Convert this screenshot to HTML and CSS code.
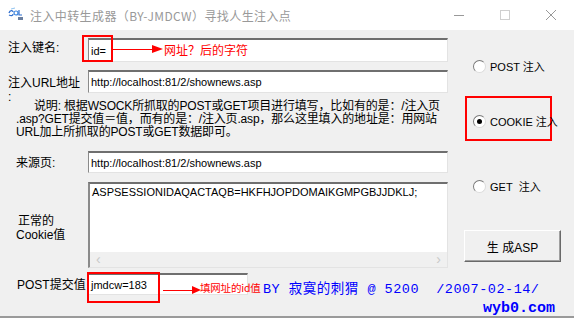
FILE: index.html
```html
<!DOCTYPE html>
<html lang="zh-CN">
<head>
<meta charset="utf-8">
<title>注入中转生成器</title>
<link rel="stylesheet" href="styles.css">
</head>
<body>
<div class="window">
  <div class="titlebar">
    <svg class="appicon" width="16" height="14" viewBox="0 0 16 14">
      <path d="M1 6 C2 3 5 3 5 5 M1 8 C3 9 5 9 5 7" fill="none" stroke="#2f6fcf" stroke-width="1.3"/>
      <circle cx="8" cy="6" r="2" fill="none" stroke="#3d86e0" stroke-width="1.2"/>
      <path d="M11 3 L11 8 L14 8" fill="none" stroke="#2f6fcf" stroke-width="1.2"/>
      <path d="M3 2 L7 1" stroke="#8fc3f0" stroke-width="1"/>
      <rect x="10" y="10" width="5" height="3" fill="#6a7fa0"/>
    </svg>
    <span class="title">注入中转生成器（BY-JMDCW）寻找人生注入点</span>
    <div class="controls">
      <span class="ctl"><svg width="12" height="12" viewBox="0 0 12 12"><path d="M1 6.5 H11" stroke="#999" stroke-width="1"/></svg></span>
      <span class="ctl"><svg width="12" height="12" viewBox="0 0 12 12"><rect x="1.5" y="1.5" width="9" height="9" fill="none" stroke="#cfcfcf" stroke-width="1"/></svg></span>
      <span class="ctl"><svg width="12" height="12" viewBox="0 0 12 12"><path d="M1 1 L11 11 M11 1 L1 11" stroke="#999" stroke-width="1"/></svg></span>
    </div>
  </div>

  <div class="client">
    <div class="top">
      <div class="form">
        <div class="row r1">
          <div class="label l1">注入键名:</div>
          <div class="field h24 annot">
            <span class="val">id=</span>
            <span class="redbox box1"></span>
            <span class="arrow arrow1"><span class="shaft"></span><span class="head"></span></span>
            <span class="note note1">网址？后的字符</span>
          </div>
        </div>
        <div class="row r2">
          <div class="label l2"><span class="ln">注入URL地址</span><span class="ln">:</span></div>
          <div class="field h23"><span class="val">http://localhost:81/2/shownews.asp</span></div>
        </div>
        <div class="desc">
          <span class="ind">说明: 根据WSOCK所抓取的POST或GET项目进行填写，比如有的是：/注入页</span><br>
          .asp?GET提交值＝值，而有的是：/注入页.asp，那么这里填入的地址是：用网站<br>
          URL加上所抓取的POST或GET数据即可。
        </div>
        <div class="row r3">
          <div class="label l3">来源页:</div>
          <div class="field h22"><span class="val">http://localhost:81/2/shownews.asp</span></div>
        </div>
        <div class="row r4">
          <div class="label l4"><span class="ln c1">正常的</span><span class="ln">Cookie值</span></div>
          <div class="field area">
            <div class="areatext">ASPSESSIONIDAQACTAQB=HKFHJOPDOMAIKGMPGBJJDKLJ;</div>
            <div class="hscroll"><span class="chev">&lsaquo;</span><span class="chev">&rsaquo;</span></div>
          </div>
        </div>
      </div>

      <div class="side">
        <div class="opt o-post"><span class="radio"></span><span>POST 注入</span></div>
        <div class="cookiebox"><div class="opt"><span class="radio on"></span><span>COOKIE 注入</span></div></div>
        <div class="opt o-get"><span class="radio"></span><span>GET&nbsp; 注入</span></div>
        <div class="btn">生 成ASP</div>
      </div>
    </div>

    <div class="bottom">
      <div class="label l5">POST提交值</div>
      <div class="field h22 small annot">
        <span class="val">jmdcw=183</span>
        <span class="redbox box2"></span>
        <span class="arrow arrow2"><span class="shaft"></span><span class="head"></span></span>
        <span class="note note2">填网址的id值</span>
      </div>
      <div class="sign">BY 寂寞的刺猬 @ 5200&nbsp; /2007-02-14/</div>
    </div>
    <div class="site">wyb0.com</div>
  </div>
  <div class="edge"></div>
</div>
</body>
</html>
```

FILE: styles.css
```css
* { box-sizing: border-box; }
html, body { margin: 0; padding: 0; }
body {
  width: 574px;
  height: 318px;
  overflow: hidden;
  background: #f0f0f0;
  font-family: "Liberation Sans", "Noto Sans CJK SC", sans-serif;
  font-size: 12px;
  color: #000;
}
.window { width: 574px; height: 318px; display: flex; flex-direction: column; }

/* title bar */
.titlebar {
  height: 30px;
  background: #fff;
  display: flex;
  align-items: center;
  padding-left: 8px;
  flex: none;
}
.appicon { flex: none; margin-top: -2px; }
.title {
  margin-left: 6px;
  font-family: "Noto Sans CJK SC", sans-serif;
  font-size: 12px;
  color: #999;
  letter-spacing: 0.4px;
}
.controls { margin-left: auto; display: flex; height: 30px; }
.ctl { width: 46px; height: 30px; display: flex; align-items: center; justify-content: center; }

/* client */
.client {
  height: 286px;
  flex: none;
  display: flex;
  flex-direction: column;
}
.top { display: flex; height: 238px; flex: none; }
.form { width: 448px; padding-left: 8px; display: flex; flex-direction: column; }

.row { display: grid; grid-template-columns: 80px 360px; }
.r1 { margin-top: 8px; height: 24px; }
.r2 { margin-top: 8px; height: 23px; }
.r3 { margin-top: 12px; height: 22px; }
.r4 { margin-top: 9px; height: 86px; }

.label { font-size: 12px; line-height: 14px; white-space: nowrap; }
.ln { display: block; }
.l1 { align-self: center; padding-bottom: 5px; }
.l2 { padding-top: 6px; }
.l3 { align-self: center; padding-left: 8px; padding-top: 1px; }
.l4 { align-self: center; padding-left: 8px; padding-top: 6px; }
.l4 .c1 { padding-left: 2px; }

.field {
  position: relative;
  background: #fff;
  border-top: 2px solid #6f6f6f;
  border-left: 1px solid #8a8a8a;
  border-right: 1px solid #e3e3e3;
  border-bottom: 1px solid #e3e3e3;
  display: flex;
  align-items: center;
  font-size: 11px;
}
.h24 { height: 24px; }
.h23 { height: 23px; }
.h22 { height: 22px; }
.val { padding-left: 2px; white-space: nowrap; }

.area { height: 86px; flex-direction: column; align-items: stretch; border-left-width: 2px; }
.areatext { flex: 1; padding: 2px 0 0 2px; white-space: nowrap; font-size: 11px; line-height: 13px; }
.hscroll {
  height: 15px;
  background: #f0f0f0;
  display: flex;
  justify-content: space-between;
  align-items: center;
  padding: 0 6px;
  color: #c8c8c8;
  font-size: 14px;
  line-height: 15px;
}

.desc {
  margin-top: 7px;
  margin-left: 8px;
  height: 39px;
  font-size: 12px;
  line-height: 13px;
  letter-spacing: -0.17px;
  white-space: nowrap;
}
.ind { padding-left: 18px; }

/* annotations */
.redbox { position: absolute; border: 2px solid #f00; }
.box1 { left: -7px; top: -5px; width: 31px; height: 27px; }
.box2 { left: -2px; top: -3px; width: 73px; height: 31px; }
.arrow { position: absolute; display: flex; align-items: center; height: 10px; }
.shaft { width: 39px; height: 1px; background: #f00; }
.head { width: 0; height: 0; border-left: 11px solid #f00; border-top: 4px solid transparent; border-bottom: 4px solid transparent; }
.arrow1 { left: 24px; top: 4px; }
.arrow2 { left: 74px; top: 10px; }
.arrow2 .shaft { width: 29px; }
.arrow2 .head { border-left-width: 9px; }
.note { position: absolute; color: #f00; font-family: "Noto Sans CJK SC", sans-serif; white-space: nowrap; }
.note1 { left: 75px; top: 0px; font-size: 12px; line-height: 20px; }
.note2 { left: 111px; top: 4px; font-size: 10.5px; line-height: 18px; letter-spacing: -0.2px; }

/* side */
.side { margin-left: 16px; width: 97px; display: flex; flex-direction: column; }
.opt { display: flex; align-items: center; height: 16px; padding-left: 9px; font-size: 11px; white-space: nowrap; }
.o-post { margin-top: 28px; }
.cookiebox {
  margin-top: 22px;
  margin-left: 1px;
  width: 87px;
  height: 45px;
  border: 2px solid #f00;
  padding-top: 15px;
}
.cookiebox .opt { padding-left: 6px; }
.o-get { margin-top: 37px; }
.radio {
  width: 13px;
  height: 13px;
  border-radius: 50%;
  background: #fff;
  border: 1px solid;
  border-color: #7a7a7a #dcdcdc #dcdcdc #7a7a7a;
  margin-right: 4px;
  display: flex;
  align-items: center;
  justify-content: center;
  flex: none;
}
.radio.on::after { content: ""; width: 5px; height: 5px; border-radius: 50%; background: #000; }
.btn {
  margin-top: 36px;
  width: 97px;
  height: 32px;
  background: #f0f0f0;
  border: 1px solid;
  border-color: #fff #696969 #696969 #fff;
  box-shadow: inset -1px -1px 0 #a0a0a0;
  display: flex;
  align-items: center;
  justify-content: center;
  font-size: 12px;
}

/* bottom */
.bottom { display: flex; align-items: center; margin-top: 5px; height: 22px; padding-left: 8px; flex: none; }
.l5 { width: 80px; padding-left: 9px; padding-top: 2px; }
.small { width: 160px; }
.sign {
  margin-left: 15px;
  color: #00f;
  font-family: "Liberation Mono", "Noto Sans CJK SC", monospace;
  font-size: 13.5px;
  letter-spacing: 0.5px;
  white-space: nowrap;
  padding-top: 6px;
}
.site {
  margin-top: 7px;
  align-self: flex-end;
  padding-right: 19px;
  color: #00f;
  font-family: "Liberation Mono", monospace;
  font-weight: bold;
  font-size: 15px;
  line-height: 14px;
  flex: none;
}
.edge { height: 2px; background: #9a9a9a; flex: none; }
```
